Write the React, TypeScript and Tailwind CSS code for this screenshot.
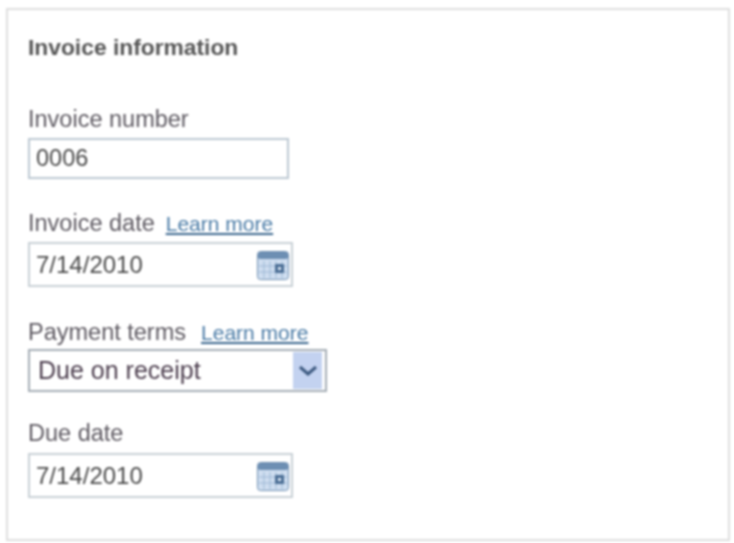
import type { ReactNode } from 'react'

function CalendarIcon() {
  return (
    <svg width="32" height="29" viewBox="0 0 32 29" className="mt-[1px] shrink-0">
      <rect x="0.5" y="0.5" width="31" height="28" rx="3" fill="#cfdef0" stroke="#6f8fb0" />
      <rect x="1" y="1" width="30" height="7" rx="2" fill="#6d8fb3" />
      <path d="M7 10v17M13 10v17M19 10v17M25 10v17M2 15h28M2 21h28" stroke="#9db7d4" strokeWidth="1" />
      <rect x="18" y="13" width="9" height="9" fill="#4c6f96" />
      <rect x="21" y="16" width="3" height="3" fill="#dbe6f3" />
    </svg>
  )
}

function Label({ children, link }: { children: ReactNode; link?: string }) {
  return (
    <div className="flex items-baseline text-[23.5px] leading-[24px] text-[#5e5a62]">
      <span>{children}</span>
      {link && <a className={`text-[21px] text-[#4a7ba6] underline decoration-[#38648c] ${link}`}>Learn more</a>}
    </div>
  )
}

function DateField({ value, className }: { value: string; className: string }) {
  return (
    <div className={`flex h-[45px] w-[265px] items-center justify-between border-2 border-[#c9d0d6] pl-[6px] pr-[2px] text-[24px] text-[#4a4a4a] ${className}`}>
      <span>{value}</span>
      <CalendarIcon />
    </div>
  )
}

export default function App() {
  return (
    <div className="h-[543px] w-[734px] bg-white pt-[8px] pb-[2px] pl-[6px] pr-[4px] font-['Liberation_Sans',sans-serif] blur-[0.8px]">
      <div className="h-full border-2 border-[#dedede] pl-[20px] pt-[25px]">
        <h2 className="text-[22.8px] leading-[24px] font-bold text-[#555555]">Invoice information</h2>

        <div className="mt-[48px]">
          <Label>Invoice number</Label>
          <div className="mt-[7px] flex h-[41px] w-[261px] items-center border-2 border-[#bcc8d2] pl-[6px] text-[23.5px] text-[#4a4a4a]">
            0006
          </div>
        </div>

        <div className="mt-[32px]">
          <Label link="ml-[11px]">Invoice date</Label>
          <DateField value="7/14/2010" className="mt-[6px]" />
        </div>

        <div className="mt-[33px]">
          <Label link="ml-[15px]">Payment terms</Label>
          <div className="mt-[4px] flex h-[43px] w-[299px] items-center justify-between border-2 border-[#a5adb5] pl-[8px] pr-[3px] text-[25px] text-[#4d3f4f]">
            <span>Due on receipt</span>
            <span className="flex h-[37px] w-[29px] items-center justify-center bg-[#c3d2f0]">
              <svg width="20" height="11" viewBox="0 0 20 11">
                <path d="M2 2l8 7 8-7" fill="none" stroke="#3d5a80" strokeWidth="3" />
              </svg>
            </span>
          </div>
        </div>

        <div className="mt-[29px]">
          <Label>Due date</Label>
          <DateField value="7/14/2010" className="mt-[8px]" />
        </div>
      </div>
    </div>
  )
}
